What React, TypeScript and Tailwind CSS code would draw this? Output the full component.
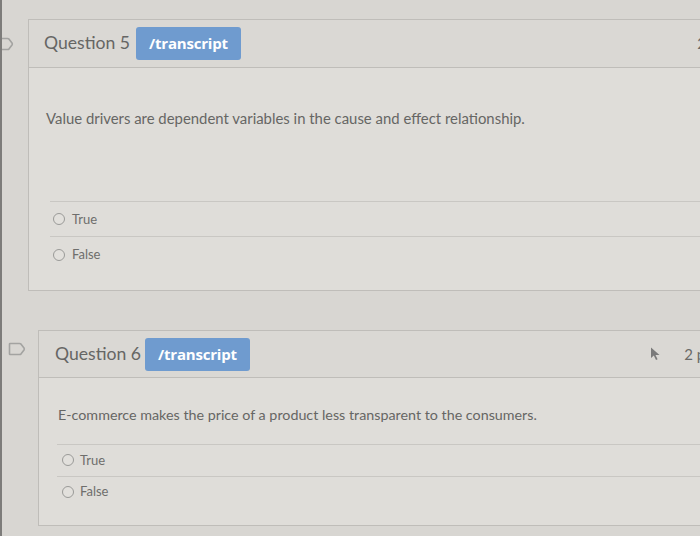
import React from "react";

function Flag() {
  return (
    <svg width="18" height="16" viewBox="0 0 18 16" fill="none">
      <path d="M2 2.5 H11.5 Q12.5 2.5 13.3 3.4 L16 7 Q16.6 8 16 9 L13.3 12.6 Q12.5 13.5 11.5 13.5 H2 Q1.5 13.5 1.5 13 V3 Q1.5 2.5 2 2.5 Z" stroke="#a3a3a1" strokeWidth="1.6" strokeLinejoin="round" />
    </svg>
  );
}

function Cursor() {
  return (
    <svg width="12" height="14" viewBox="0 0 12 14">
      <path d="M1 0.5 L1 11 L3.8 8.6 L6 13 L7.6 12.2 L5.5 8 L9.5 8 Z" fill="#7a7a7a" />
    </svg>
  );
}

function Radio() {
  return <span className="inline-block w-[12px] h-[12px] rounded-full border border-[#9a9a98] bg-[#e2e0dc]" />;
}

function Badge() {
  return (
    <span className="inline-flex items-center h-[33px] px-[13px] rounded-[3px] bg-[#6f9bcf] text-white font-bold text-[15px] tracking-[-0.2px]" style={{ fontFamily: "'Open Sans', Lato, sans-serif" }}>
      /transcript
    </span>
  );
}

export default function App() {
  return (
    <div className="w-[700px] h-[536px] overflow-hidden bg-[#d8d6d2] border-l-[2px] border-[#7d7c7a] flex flex-col" style={{ fontFamily: "Lato, 'Open Sans', sans-serif" }}>
      {/* Question 5 */}
      <div className="flex items-start mt-[19px]">
        <div className="w-[32px] flex-none -ml-[6px] mt-[17px]">
          <Flag />
        </div>
        <div className="flex-1 -mr-[40px] border border-[#bfbdb9] bg-[#dfddd9]">
          <div className="h-[48px] flex items-center pl-[15px] bg-[#dad8d4] border-b border-[#bfbdb9]">
            <span className="text-[17.6px] text-[#666664] mr-[6px]">Question 5</span>
            <Badge />
            <span className="ml-auto mr-[33px] text-[15px] text-[#6a6a68]">2</span>
          </div>
          <div className="pl-[17px] pt-[39px] text-[14.9px] text-[#666664]">
            Value drivers are dependent variables in the cause and effect relationship.
          </div>
          <div className="ml-[21px] mt-[72px] border-t border-[#c9c7c3]">
            <div className="h-[35px] flex items-center gap-[7px] pl-[3px] border-b border-[#c9c7c3]">
              <Radio />
              <span className="text-[13px] text-[#6e6e6c]">True</span>
            </div>
            <div className="h-[35px] flex items-center gap-[7px] pl-[3px]">
              <Radio />
              <span className="text-[13px] text-[#6e6e6c]">False</span>
            </div>
          </div>
          <div className="h-[18px]" />
        </div>
      </div>

      {/* Question 6 */}
      <div className="flex items-start mt-[39px]">
        <div className="w-[36px] flex-none pl-[6px] mt-[11px]">
          <Flag />
        </div>
        <div className="flex-1 -mr-[40px] border border-[#bfbdb9] bg-[#dfddd9]">
          <div className="h-[47px] flex items-center pl-[16px] bg-[#dad8d4] border-b border-[#bfbdb9]">
            <span className="text-[17.6px] text-[#666664] mr-[4px]">Question 6</span>
            <Badge />
            <span className="ml-auto flex items-center">
              <Cursor />
              <span className="ml-[22px] mr-[22px] text-[15px] text-[#6a6a68]">2 pts</span>
            </span>
          </div>
          <div className="pl-[19px] pt-[26px] text-[14.3px] text-[#666664]">
            E-commerce makes the price of a product less transparent to the consumers.
          </div>
          <div className="ml-[18px] mt-[18px] border-t border-[#c9c7c3]">
            <div className="h-[32px] flex items-center gap-[6px] pl-[5px] border-b border-[#c9c7c3]">
              <Radio />
              <span className="text-[13px] text-[#6e6e6c]">True</span>
            </div>
            <div className="h-[30px] flex items-center gap-[6px] pl-[5px]">
              <Radio />
              <span className="text-[13px] text-[#6e6e6c]">False</span>
            </div>
          </div>
          <div className="h-[18px]" />
        </div>
      </div>
    </div>
  );
}
